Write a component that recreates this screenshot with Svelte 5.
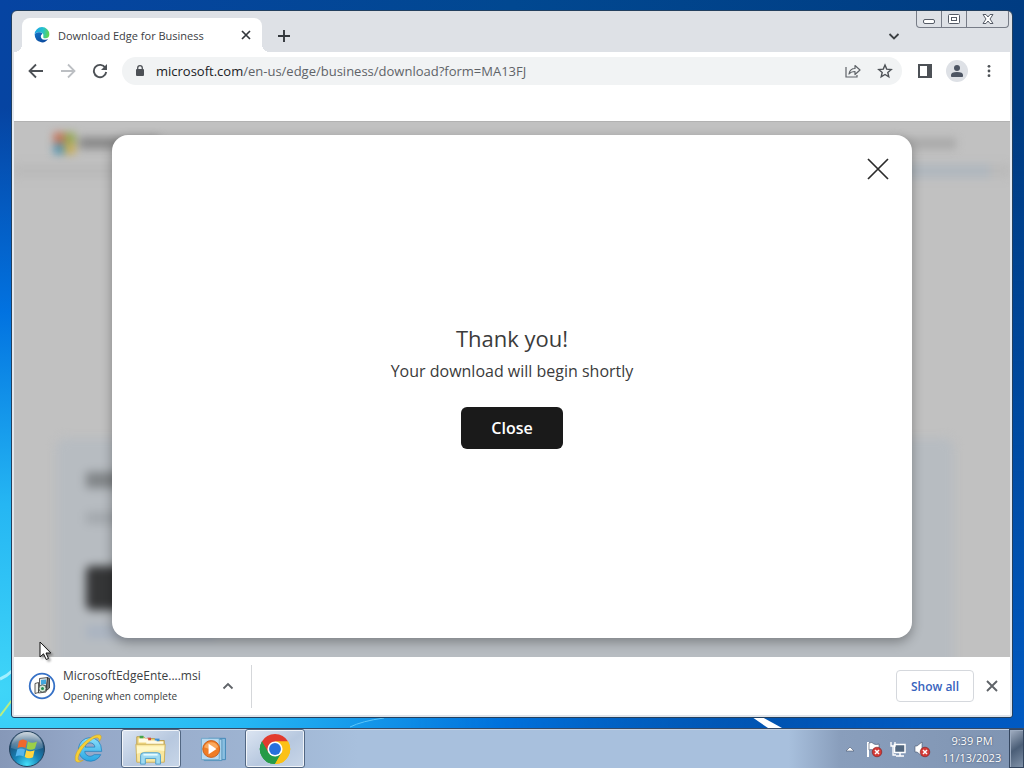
<script>
  let address = $state('microsoft.com/en-us/edge/business/download?form=MA13FJ');
  let open = $state(true);
</script>

<div class="desktop">
  <svg class="streaks" viewBox="0 0 1024 728" preserveAspectRatio="none" aria-hidden="true">
    <path d="M0 679Q7 676 12 671" stroke="#a3efff" stroke-width="3" fill="none" />
    <path d="M0 716L12 700" stroke="#b7ee83" stroke-width="2" fill="none" />
    <path d="M350 727Q362 721 384 718" stroke="#5cc6fa" stroke-width="1" fill="none" />
    <path d="M752 717L762 717L782 728L768 728Z" fill="#fff" />
  </svg>

  <main class="workspace">
    <section class="window" aria-label="Browser window">
      <header class="tabstrip">
        <div class="tab">
          <svg class="edge" viewBox="0 0 24 24" aria-hidden="true">
            <defs>
              <linearGradient id="eg" x1="0" y1="0.3" x2="1" y2="0.5"><stop offset="0" stop-color="#1aa3e6" /><stop offset="0.55" stop-color="#27c2cc" /><stop offset="1" stop-color="#63d64c" /></linearGradient>
              <linearGradient id="eb" x1="0" y1="0" x2="0.6" y2="1"><stop offset="0" stop-color="#1474c7" /><stop offset="1" stop-color="#0c4ca0" /></linearGradient>
            </defs>
            <path d="M1 11A11 11 0 0 1 23 11Q23 17 17 17Q13 17 14 14Q15 9 9 8Q3 7 1 11Z" fill="url(#eg)" />
            <path d="M1 11Q3 7 9 8Q14 9 12 11Q9 13 11 17Q14 21 21 18Q17 24 11 23Q1 21 1 11Z" fill="url(#eb)" />
          </svg>
          <span class="tab-title">Download Edge for Business</span>
          <button class="icon-btn tiny" aria-label="Close tab"><svg viewBox="0 0 16 16"><path d="M4 4L12 12M12 4L4 12" stroke="#33373c" stroke-width="1.7" /></svg></button>
        </div>
        <button class="icon-btn new-tab" aria-label="New tab"><svg viewBox="0 0 16 16"><path d="M8 2V14M2 8H14" stroke="#33373c" stroke-width="1.9" /></svg></button>
        <button class="icon-btn search-tabs" aria-label="Search tabs"><svg viewBox="0 0 16 16"><path d="M3.500 6L8 10.500L12.500 6" fill="none" stroke="#3c4043" stroke-width="1.8" /></svg></button>
        <div class="caption">
          <button aria-label="Minimize"><svg viewBox="0 0 16 16"><rect x="2.500" y="8.500" width="11" height="4" rx="1.500" fill="#fff" stroke="#555b66" /></svg></button>
          <button aria-label="Restore"><svg viewBox="0 0 16 16"><rect x="2.500" y="3.500" width="11" height="9" rx="1" fill="#fff" stroke="#555b66" /><rect x="5.500" y="6.500" width="5" height="3" fill="#fff" stroke="#555b66" /></svg></button>
          <button class="wide" aria-label="Close window"><svg viewBox="0 0 16 16"><path d="M3 3.500H6L8 6L10 3.500H13L10 8L13 12.500H10L8 10L6 12.500H3L6 8Z" fill="#fff" stroke="#555b66" stroke-width="1" /></svg></button>
        </div>
      </header>

      <nav class="toolbar" aria-label="Browser toolbar">
        <button class="icon-btn" aria-label="Back"><svg viewBox="0 0 16 16"><path d="M15 8H2M8 1.500L1.500 8L8 14.500" fill="none" stroke="#4d5156" stroke-width="1.8" /></svg></button>
        <button class="icon-btn" aria-label="Forward"><svg viewBox="0 0 16 16"><path d="M1 8H14M8 1.500L14.500 8L8 14.500" fill="none" stroke="#bcbfc3" stroke-width="1.8" /></svg></button>
        <button class="icon-btn" aria-label="Reload"><svg viewBox="0 0 16 16"><path d="M13.300 4.700A6.200 6.200 0 1 0 14.200 9" fill="none" stroke="#4d5156" stroke-width="1.9" /><path d="M15 1V7H9Z" fill="#4d5156" /></svg></button>
        <div class="omnibox">
          <svg class="lock" viewBox="0 0 12 14" aria-hidden="true"><rect x="2" y="5" width="8" height="7" rx="1" fill="#4d5156" /><path d="M3.700 6V4A2.300 2.300 0 0 1 8.300 4V6" fill="none" stroke="#4d5156" stroke-width="1.300" /></svg>
          <label class="address">
            <span class="shown" aria-hidden="true"><b>{address.split('/')[0]}</b>{address.slice(address.indexOf('/'))}</span>
            <input aria-label="Address" bind:value={address} />
          </label>
          <button class="icon-btn" aria-label="Share"><svg viewBox="0 0 16 16"><path d="M1 4V14H12V12" fill="none" stroke="#5f6368" stroke-width="1.200" /><path d="M4 11Q5 5.500 10 5.500V2.500L15 7L10 11.500V8.500Q6 8.500 4 11Z" fill="none" stroke="#5f6368" stroke-width="1.200" stroke-linejoin="round" /></svg></button>
          <button class="icon-btn" aria-label="Bookmark this tab"><svg viewBox="0 0 16 16"><path d="M8 2L9.700 6.100L14.200 6.500L10.800 9.400L11.800 13.800L8 11.500L4.200 13.800L5.200 9.400L1.800 6.500L6.300 6.100Z" fill="none" stroke="#4d5156" stroke-width="1.400" /></svg></button>
        </div>
        <button class="icon-btn" aria-label="Side panel"><svg viewBox="0 0 16 16"><path d="M1 1H15V15H1ZM3 3V13H10V3Z" fill="#4d5156" fill-rule="evenodd" /></svg></button>
        <button class="icon-btn avatar" aria-label="Profile"><svg viewBox="0 0 16 16"><circle cx="8" cy="5" r="3" fill="#4d5563" /><path d="M2 14V12Q2 9 8 9Q14 9 14 12V14Z" fill="#4d5563" /></svg></button>
        <button class="icon-btn" aria-label="Menu"><svg viewBox="0 0 16 16"><g fill="#4d5156"><circle cx="8" cy="3.300" r="1.400" /><circle cx="8" cy="8" r="1.400" /><circle cx="8" cy="12.700" r="1.400" /></g></svg></button>
      </nav>
      <div class="bookmarks"></div>

      <div class="page">
        <div class="backdrop" aria-hidden="true">
          <div class="site-head">
            <div class="squares"><i></i><i></i><i></i><i></i></div>
            <div class="brand"></div>
            <div class="links"></div>
          </div>
          <div class="site-rule"><div></div></div>
          <div class="site-card">
            <div class="line strong"></div>
            <div class="line"></div>
            <div class="block"></div>
            <div class="line blue"></div>
          </div>
        </div>
        {#if open}
          <div class="modal" role="dialog" aria-labelledby="thanks">
            <button class="dismiss" aria-label="Close dialog" onclick={() => (open = false)}><svg viewBox="0 0 24 24"><path d="M2 2L22 22M22 2L2 22" stroke="#2b2b2b" stroke-width="1.700" /></svg></button>
            <h1 id="thanks">Thank you!</h1>
            <p>Your download will begin shortly</p>
            <button class="close" onclick={() => (open = false)}>Close</button>
          </div>
        {/if}
      </div>

      <footer class="downloads">
        <button class="file">
          <svg class="progress" viewBox="0 0 28 28" aria-hidden="true">
            <circle cx="14" cy="14" r="12.300" fill="#fff" stroke="#3671c6" stroke-width="1.800" />
            <path d="M11.500 6.500L19.500 5.500V13.500L11.500 14.500Z" fill="#dfe4e4" stroke="#333" stroke-width=".8" />
            <path d="M13 8L18 7.500V12L13 12.700Z" fill="#42a6dd" />
            <path d="M19.500 5.500L21.500 6.500V16L18.500 18.500V13.500Z" fill="#777" stroke="#222" stroke-width=".8" />
            <path d="M7 11.500L10.500 10.500V20.500L7 21.500Z" fill="#f4f4ee" stroke="#333" stroke-width=".8" />
            <path d="M10.500 16L18 15.500V20L10.500 21Z" fill="#e4e6e1" stroke="#333" stroke-width=".8" />
            <circle cx="14.500" cy="16.500" r="3.600" fill="#d5e9d8" stroke="#4b5350" stroke-width=".8" /><circle cx="14.500" cy="16.500" r="1.500" fill="#238b52" />
          </svg>
          <span class="file-text"><span class="name">MicrosoftEdgeEnte....msi</span><span class="state">Opening when complete</span></span>
        </button>
        <button class="icon-btn more" aria-label="Download options"><svg viewBox="0 0 16 16"><path d="M3.500 10.500L8 6L12.500 10.500" fill="none" stroke="#5f6368" stroke-width="1.800" /></svg></button>
        <button class="show-all">Show all</button>
        <button class="icon-btn shut" aria-label="Close downloads bar"><svg viewBox="0 0 16 16"><path d="M3 3L13 13M13 3L3 13" stroke="#5f6368" stroke-width="1.900" /></svg></button>
      </footer>
    </section>
  </main>

  <footer class="taskbar">
    <button class="start" aria-label="Start">
      <svg viewBox="0 0 38 38">
        <defs><radialGradient id="orb" cx=".5" cy=".95" r=".95"><stop offset="0" stop-color="#45e0fa" /><stop offset=".38" stop-color="#1784b8" /><stop offset=".75" stop-color="#1c5079" /><stop offset="1" stop-color="#7891a6" /></radialGradient>
        <linearGradient id="gloss" x2="0" y2="1"><stop stop-color="#fff" stop-opacity=".65" /><stop offset="1" stop-color="#fff" stop-opacity=".08" /></linearGradient></defs>
        <circle cx="19" cy="19" r="17.500" fill="url(#orb)" stroke="#23415c" />
        <path d="M3 18A16 16 0 0 1 35 18Q19 24 3 18Z" fill="url(#gloss)" />
        <path d="M11 11Q15 8 19 11L17.500 18Q14 16 9.500 18Z" fill="#f0682c" />
        <path d="M20 11.500Q24 14 29 11.500L27 18.500Q23 21 18.500 18.500Z" fill="#9bcf48" />
        <path d="M9.200 19.500Q13 17.500 17 19.800L15.500 26.500Q12 24.500 7.500 26.500Z" fill="#55b5ee" />
        <path d="M18.200 20.200Q22 22.500 26.600 20.200L25 27.200Q21 29.500 16.700 27Z" fill="#ffd540" />
      </svg>
    </button>
    <button class="task" aria-label="Internet Explorer">
      <svg viewBox="0 0 36 36">
        <defs><linearGradient id="ie" x2="0" y2="1"><stop stop-color="#8adffb" /><stop offset="1" stop-color="#2aa6e2" /></linearGradient></defs>
        <path d="M18.500 6A12.500 12.500 0 1 0 30.500 24H23.500Q19 27.500 15 24Q13.500 22.500 13.500 20.500H31.500Q31 6.500 18.500 6ZM13.800 16Q15 11.500 19 11.500Q23.500 11.500 24.300 16Z" fill="url(#ie)" stroke="#1878b7" stroke-width=".7" fill-rule="evenodd" />
        <path d="M29 10Q33 4 29 3Q23 2 12 12Q2 22 3.500 30Q5 34 12 30Q4 32 7.500 24Q12 14 22 7.500Q29 3.500 29 10Z" fill="#f6cf37" stroke="#c79c20" stroke-width=".5" />
      </svg>
    </button>
    <button class="task active" aria-label="File Explorer">
      <svg viewBox="0 0 36 36">
        <path d="M3 5H10L12 7H22L23 9H32V31H3Z" fill="#f2d980" stroke="#b99a4a" />
        <path d="M6 4H10V7H6Z" fill="#43a54c" /><path d="M14 6H18V9H14Z" fill="#d64b3c" /><path d="M22 7H27V10H22Z" fill="#418fd0" />
        <path d="M5 7H15V11H5ZM13 9H24V13H13ZM21 10H31V14H21Z" fill="#fffbe7" />
        <path d="M2 13H33L32 32H3Z" fill="#f9e79f" stroke="#cbb05f" /><path d="M3 15H32V20Q17 18 3 23Z" fill="#fff8c8" />
        <path d="M7 34V25Q7 22 10 22H25Q28 22 28 25V34H23V28H12V34Z" fill="#9edaf2" stroke="#4c9dcb" /><path d="M10 24H25" stroke="#e5faff" stroke-width="2" />
      </svg>
    </button>
    <button class="task media" aria-label="Media Player">
      <svg viewBox="0 0 36 36">
        <path d="M13 6H32V30H13Z" fill="#8abfe1" stroke="#3a83b4" /><path d="M8 7H28V31H8Z" fill="#a9d2eb" stroke="#508fb8" /><path d="M5 6H25V30H5Z" fill="#b9d9ee" stroke="#6aa5c9" />
        <circle cx="16" cy="18" r="9.500" fill="#ef7c24" stroke="#c45b19" /><path d="M8 16A8.500 8.500 0 0 1 24 16Q16 20 8 16Z" fill="#ffc27e" opacity=".65" /><path d="M13 12V24L22 18Z" fill="#fff" />
      </svg>
    </button>
    <button class="task active" aria-label="Chrome">
      <svg viewBox="0 0 36 36">
        <path d="M18 18L4.140 10A16 16 0 0 1 31.860 10Z" fill="#e23b2e" />
        <path d="M18 18L31.860 10A16 16 0 0 1 18 34Z" fill="#fbc116" />
        <path d="M18 18V34A16 16 0 0 1 4.140 10Z" fill="#269b48" />
        <path d="M18 10H31.860L24.930 22L18 18Z" fill="#fbc116" /><path d="M4.140 10L11.070 22L18 18L18 10H8Z" fill="#e23b2e" /><path d="M4.140 10L11.070 22L18 26L24.930 22L18 34A16 16 0 0 1 4.140 10Z" fill="#269b48" /><path d="M31.860 10H18L25 14V22L18 34A16 16 0 0 0 31.860 10Z" fill="#fbc116" />
        <circle cx="18" cy="18" r="8" fill="#fff" /><circle cx="18" cy="18" r="6.300" fill="#2870dc" />
      </svg>
    </button>
    <div class="tray">
      <button aria-label="Show hidden icons"><svg viewBox="0 0 18 18"><path d="M5 11L9 7L13 11Z" fill="#fff" stroke="#49576e" stroke-width=".6" /></svg></button>
      <button aria-label="Action Center"><svg viewBox="0 0 18 18"><path d="M3 2V17" stroke="#fff" stroke-width="2" /><path d="M4 3Q7 1.500 9 4Q11 5 14 4V11Q9 12 8 10Q6 9 4 10Z" fill="#fff" stroke="#435169" stroke-width=".6" /><circle cx="12" cy="12" r="4.800" fill="#d43a36" stroke="#7e1c1c" stroke-width=".6" /><path d="M10 10L14 14M14 10L10 14" stroke="#fff" stroke-width="1.500" /></svg></button>
      <button aria-label="Network"><svg viewBox="0 0 18 18"><path d="M5.500 4.500H16V12.500H5.500Z" fill="#52677f" stroke="#fff" stroke-width="1.500" /><path d="M11 13V16M7 16H15" stroke="#fff" stroke-width="1.500" /><path d="M2 2V6H6V2M4 6V15H7" fill="none" stroke="#fff" stroke-width="1.300" /></svg></button>
      <button aria-label="Volume"><svg viewBox="0 0 18 18"><path d="M2 6H4L9 2V16L4 12H2Z" fill="#fff" stroke="#46546c" stroke-width=".6" /><circle cx="12" cy="12" r="4.800" fill="#d43a36" stroke="#7e1c1c" stroke-width=".6" /><path d="M10 10L14 14M14 10L10 14" stroke="#fff" stroke-width="1.500" /></svg></button>
      <div class="clock"><time>9:39 PM</time><time>11/13/2023</time></div>
    </div>
    <button class="peek" aria-label="Show desktop"></button>
  </footer>

  <svg class="pointer" viewBox="0 0 14 20" aria-hidden="true"><path d="M1 1V16L4.500 12.800L7.200 18.500L9.500 17.500L7 12H11.800Z" fill="#fff" stroke="#111" stroke-width="1" /></svg>
</div>

<style>
  :global(body) { margin: 0; }
  * { box-sizing: border-box; }
  button { font: inherit; color: inherit; background: none; border: 0; padding: 0; display: flex; align-items: center; justify-content: center; }
  svg { display: block; }
  .desktop {
    position: relative; display: flex; flex-direction: column; min-height: 100vh; overflow: hidden;
    font-family: "Open Sans", "Noto Sans", sans-serif; font-size: 12px; color: #3c4043;
    background:
      radial-gradient(ellipse 76% 76% at 0% 90%, #3fd5f8 0%, #25b6f3 32%, rgba(0, 126, 240, .8) 65%, rgba(0, 92, 205, 0) 100%),
      linear-gradient(90deg, #0644a2, #014891 50%, #003c82 100%);
    background-color: #004691;
  }
  .desktop::before { content: ""; position: absolute; inset: 0; background: linear-gradient(180deg, rgba(0, 100, 215, 0) 15%, rgba(0, 100, 215, .75) 95%); mask-image: linear-gradient(90deg, transparent 40%, #000 90%); }
  .streaks { position: absolute; left: 0; top: 0; width: 100%; height: calc(100% - 40px); }
  .workspace { position: relative; flex: 1; display: flex; padding: 10px 11px; }
  .window { flex: 1; min-width: 0; display: flex; flex-direction: column; padding: 0 2px 2px; border: 1px solid #23405f; border-radius: 6px 6px 3px 3px; background: linear-gradient(180deg, #dee1e6 0, #dee1e6 60px, #e4ebf3 110px, #dfe4ea 100%); }
  .tabstrip { display: flex; height: 41px; padding-left: 8px; }
  .tab { position: relative; display: flex; align-items: center; gap: 8px; width: 240px; margin-top: 7px; padding: 0 8px 0 12px; background: #fff; border-radius: 8px 8px 0 0; }
  .tab::before, .tab::after { content: ""; position: absolute; bottom: 0; width: 8px; height: 8px; }
  .tab::before { left: -8px; background: radial-gradient(circle at 0 0, transparent 8px, #fff 8px); }
  .tab::after { right: -8px; background: radial-gradient(circle at 100% 0, transparent 8px, #fff 8px); }
  .edge { width: 16px; height: 16px; flex: none; }
  .tab-title { flex: 1; white-space: nowrap; font-size: 11px; }
  .icon-btn { width: 32px; height: 32px; flex: none; }
  .icon-btn svg { width: 16px; height: 16px; }
  .icon-btn.tiny { width: 16px; height: 16px; }
  .new-tab { margin: 9px 0 0 6px; }
  .search-tabs { margin: 9px 6px 0 auto; }
  .caption { display: flex; height: 17px; margin-right: 1px; border: 1px solid #777c87; border-top: 0; border-radius: 0 0 4px 4px; }
  .caption button { width: 25px; border-right: 1px solid #777c87; }
  .caption button.wide { width: 41px; border: 0; }
  .caption svg { width: 16px; height: 16px; }
  .toolbar { display: flex; align-items: center; height: 37px; padding: 0 5px 0 6px; background: #fff; }
  .omnibox { flex: 1; min-width: 0; height: 28px; display: flex; align-items: center; margin: 0 7px 0 6px; padding: 0 1px 0 12px; border-radius: 14px; background: #f1f3f4; }
  .lock { width: 12px; height: 14px; margin-right: 10px; flex: none; }
  .address { position: relative; flex: 1; min-width: 0; font-size: 13px; }
  .shown { color: #5f6368; white-space: nowrap; }
  .shown b { font-weight: 400; color: #202124; }
  .address input { position: absolute; inset: 0; width: 100%; padding: 0; border: 0; outline: 0; background: none; font: inherit; color: transparent; caret-color: #202124; }
  .avatar svg { width: 22px; height: 22px; padding: 3px; border-radius: 50%; background: #dee1e6; }
  .bookmarks { height: 32px; background: #fff; }
  .page { position: relative; flex: 1; display: flex; padding: 13px 16px 19px; background: #c1c1c1; border-top: 1px solid #b2b2b2; overflow: hidden; }
  .backdrop { position: absolute; inset: 0; overflow: hidden; }
  .site-head { display: flex; align-items: center; gap: 4px; height: 42px; padding: 0 54px 0 40px; filter: blur(4px); }
  .squares { display: grid; grid-template-columns: 10px 10px; grid-template-rows: 10px 10px; gap: 1px; }
  .squares i:nth-child(1) { background: #c46547; }
  .squares i:nth-child(2) { background: #8ba23e; }
  .squares i:nth-child(3) { background: #458dac; }
  .squares i:nth-child(4) { background: #c9a945; }
  .brand { width: 80px; height: 12px; background: #898989; }
  .links { width: 60px; height: 11px; margin-left: auto; background: #a9a9a9; }
  .site-rule { display: flex; justify-content: flex-end; height: 14px; padding-right: 20px; background: #bababa; filter: blur(4px); }
  .site-rule div { width: 110px; background: #b0b7be; }
  .site-card { margin: 260px 56px 0 42px; padding: 34px 30px; height: 260px; background: #b7bcc1; border-radius: 10px; filter: blur(5px); display: flex; flex-direction: column; gap: 24px; }
  .line { width: 130px; height: 12px; background: #a3a8ad; }
  .line.strong { height: 16px; background: #818588; }
  .block { width: 140px; height: 44px; margin-top: 18px; flex: none; border-radius: 5px; background: #353637; }
  .line.blue { margin-top: -8px; background: #a9b3c1; flex: none; }
  .modal { position: relative; display: flex; flex-direction: column; align-items: center; justify-content: center; width: 100%; max-width: 800px; margin: 0 auto; padding-bottom: 2px; border-radius: 16px; background: #fff; color: #3b3b3b; box-shadow: 0 4px 12px rgba(0, 0, 0, .32); }
  .dismiss { position: absolute; top: 22px; right: 22px; width: 24px; height: 24px; }
  .dismiss svg { width: 24px; height: 24px; }
  h1 { margin: 0; font-size: 22px; line-height: 32px; font-weight: 400; }
  p { margin: 3px 0 22px; font-size: 16px; line-height: 28px; }
  .close { width: 102px; height: 42px; border-radius: 6px; background: #1a1a1a; color: #fff; font-size: 16px; font-weight: 600; }
  .downloads { display: flex; align-items: center; height: 58px; padding: 0 6px 0 14px; background: #fff; }
  .file { gap: 7px; text-align: left; }
  .progress { width: 28px; height: 28px; }
  .file-text { display: flex; flex-direction: column; width: 148px; white-space: nowrap; }
  .name { font-size: 12px; line-height: 20px; }
  .state { font-size: 10px; line-height: 20px; }
  .more { width: 41px; height: 43px; padding-right: 6px; border-right: 1px solid #d5d7da; }
  .show-all { width: 78px; height: 32px; margin-left: auto; border: 1px solid #d5d8dd; border-radius: 4px; color: #3763bd; font-weight: 600; }
  .shut { width: 24px; margin-left: 6px; }
  .taskbar { position: relative; display: flex; align-items: center; gap: 2px; height: 40px; border-top: 1px solid #354965; box-shadow: inset 0 1px 0 #c3d1e3; background: linear-gradient(90deg, #8698b8 0, #95a8c8 8%, #9eb4d2 25%, #a8c0dd 35%, #a8c0dd 77%, #899ebc 82%, #7f94b2 100%); }
  .start { width: 57px; height: 39px; padding-right: 3px; }
  .start svg { width: 38px; height: 38px; }
  .task { width: 60px; height: 39px; border-radius: 3px; }
  .task svg { width: 34px; height: 34px; }
  .task.media svg { width: 32px; height: 32px; }
  .task.active { border: 1px solid #526783; box-shadow: inset 0 0 0 1px rgba(255, 255, 255, .75); background: linear-gradient(145deg, #dce5f2, #b7c8df 55%, #c8d6e8); }
  .tray { display: flex; align-items: center; margin-left: auto; gap: 6px; height: 100%; color: #fff; }
  .tray svg { width: 18px; height: 18px; }
  .clock { display: flex; flex-direction: column; align-items: center; width: 70px; font-size: 11px; line-height: 17px; text-shadow: 0 0 2px #34445e; }
  .peek { width: 15px; height: 39px; border: 1px solid #34465f; box-shadow: inset 1px 1px 0 #9cabc0; background: linear-gradient(145deg, #a4b1c4, #4b5e77 50%, #7f91a8); }
  .pointer { position: absolute; left: 39px; top: 641px; width: 14px; height: 20px; filter: drop-shadow(2px 2px 1px rgba(0, 0, 0, .35)); }
</style>
